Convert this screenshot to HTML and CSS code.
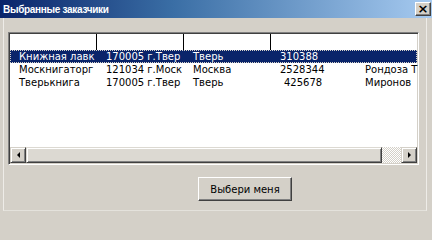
FILE: index.html
```html
<!DOCTYPE html>
<html>
<head>
<meta charset="utf-8">
<link rel="stylesheet" href="styles.css">
</head>
<body>
<div class="window">
  <div class="titlebar">
    <span class="title">Выбранные заказчики</span>
    <span class="close">×</span>
  </div>
  <div class="client">
    <div class="listview">
      <div class="grid header">
        <div class="hcell"></div>
        <div class="hcell"></div>
        <div class="hcell"></div>
        <div class="hcell last"></div>
        <div class="hcell last"></div>
      </div>
      <div class="rows">
        <div class="grid row selected">
          <div class="cell">Книжная лавк</div>
          <div class="cell">170005 г.Твер</div>
          <div class="cell">Тверь</div>
          <div class="cell">310388</div>
          <div class="cell"></div>
        </div>
        <div class="grid row">
          <div class="cell">Москнигаторг</div>
          <div class="cell">121034 г.Моск</div>
          <div class="cell">Москва</div>
          <div class="cell">2528344</div>
          <div class="cell">Рондоза Т</div>
        </div>
        <div class="grid row">
          <div class="cell">Тверькнига</div>
          <div class="cell">170005 г.Твер</div>
          <div class="cell">Тверь</div>
          <div class="cell ind">425678</div>
          <div class="cell">Миронов</div>
        </div>
      </div>
      <div class="hscroll">
        <div class="sbtn"><span class="arr left"></span></div>
        <div class="thumb"></div>
        <div class="track"></div>
        <div class="sbtn"><span class="arr right"></span></div>
      </div>
    </div>
    <div class="actions">
      <button class="btn">Выбери меня</button>
    </div>
  </div>
</div>
</body>
</html>
```

FILE: styles.css
```css
html, body {
  margin: 0;
  padding: 0;
  width: 432px;
  height: 216px;
  overflow: hidden;
  background: #d4d0c8;
  font-family: "DejaVu Sans", "Liberation Sans", sans-serif;
  font-size: 10px;
}

.window {
  width: 432px;
  height: 216px;
  display: flex;
  flex-direction: column;
}

.titlebar {
  height: 18px;
  display: flex;
  align-items: center;
  justify-content: space-between;
  background: linear-gradient(to right, #0a246a 0%, #3a6ea5 40%, #a6caf0 100%);
  padding-left: 3px;
  box-sizing: border-box;
}

.title {
  color: #fff;
  font-family: "Liberation Sans", sans-serif;
  font-weight: bold;
  font-size: 10px;
  letter-spacing: -0.3px;
}

.close {
  width: 16px;
  height: 14px;
  margin-right: 1px;
  box-sizing: border-box;
  background: #d4d0c8;
  border-top: 1px solid #fff;
  border-left: 1px solid #fff;
  border-right: 1px solid #404040;
  border-bottom: 1px solid #404040;
  box-shadow: inset -1px -1px 0 #808080;
  color: #000;
  font-family: "DejaVu Sans", sans-serif;
  font-weight: bold;
  font-size: 13px;
  line-height: 11px;
  text-align: center;
}

.client {
  flex: 1;
  margin: 0 5px 5px 3px;
  border-left: 1px solid #eeece8;
  border-right: 1px solid #eeece8;
  border-bottom: 1px solid #e4e2dc;
  padding: 14px 7px 0 4px;
  display: flex;
  flex-direction: column;
}

.listview {
  height: 133px;
  box-sizing: border-box;
  border-top: 1px solid #808080;
  border-left: 1px solid #808080;
  border-right: 1px solid #fff;
  border-bottom: 1px solid #fff;
  box-shadow: inset 1px 1px 0 #404040, inset -1px -1px 0 #d4d0c8;
  background: #fff;
  padding: 1px;
  display: flex;
  flex-direction: column;
  overflow: hidden;
}

.grid {
  display: grid;
  grid-template-columns: 87px 87px 87px 85px 1fr;
}

.header {
  height: 16px;
  flex-shrink: 0;
}

.hcell {
  height: 16px;
  box-sizing: border-box;
  border-right: 1px solid #000;
}

.hcell.last { border-right: none; }

.rows {
  flex: 1;
}

.row {
  height: 13px;
  color: #000;
  font-family: "DejaVu Sans", sans-serif;
  font-size: 10px;
  line-height: 13px;
}

.row.selected {
  background: #0a246a;
  color: #fff;
  outline: 1px dotted #d4d0c8;
  outline-offset: -1px;
}

.cell {
  padding-left: 9px;
  white-space: nowrap;
  min-width: 0;
}

.cell.ind { padding-left: 13px; }

.hscroll {
  height: 16px;
  display: flex;
  flex-shrink: 0;
}

.sbtn {
  width: 16px;
  height: 16px;
  box-sizing: border-box;
  background: #d4d0c8;
  border-top: 1px solid #d4d0c8;
  border-left: 1px solid #d4d0c8;
  border-right: 1px solid #404040;
  border-bottom: 1px solid #404040;
  box-shadow: inset 1px 1px 0 #fff, inset -1px -1px 0 #808080;
  display: flex;
  align-items: center;
  justify-content: center;
}

.arr {
  width: 0;
  height: 0;
  border-top: 3px solid transparent;
  border-bottom: 3px solid transparent;
}

.arr.left { border-right: 3px solid #000; }
.arr.right { border-left: 3px solid #000; }

.thumb {
  width: 356px;
  height: 16px;
  box-sizing: border-box;
  background: #dcd9d2;
  border-top: 1px solid #dcd9d2;
  border-left: 1px solid #dcd9d2;
  border-right: 1px solid #404040;
  border-bottom: 1px solid #404040;
  box-shadow: inset 1px 1px 0 #fff, inset -1px -1px 0 #808080;
}

.track {
  flex: 1;
  background-color: #ece9e4;
  background-image: repeating-conic-gradient(#fff 0 25%, #d4d0c8 0 50%);
  background-size: 2px 2px;
}

.actions {
  display: flex;
  padding-top: 12px;
  padding-left: 190px;
}

.btn {
  width: 94px;
  height: 24px;
  box-sizing: border-box;
  background: #d4d0c8;
  border-top: 1px solid #fff;
  border-left: 1px solid #fff;
  border-right: 1px solid #404040;
  border-bottom: 1px solid #404040;
  box-shadow: inset -1px -1px 0 #808080;
  font-family: "DejaVu Sans", sans-serif;
  font-size: 10px;
  color: #000;
  padding: 0;
}
```
